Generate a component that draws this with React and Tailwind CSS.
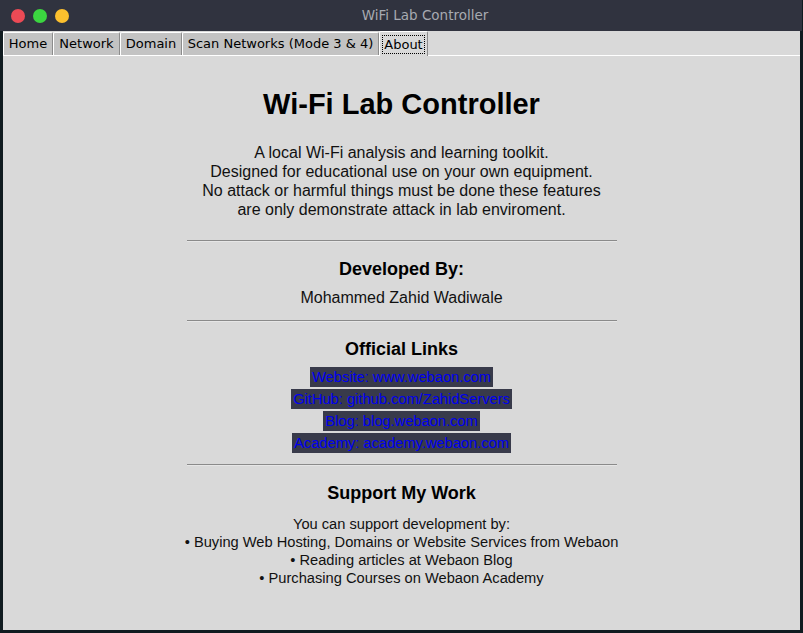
import React from "react";

const tabs = [
  { label: "Home", w: "w-[50px]" },
  { label: "Network", w: "w-[67px]" },
  { label: "Domain", w: "w-[62px]" },
  { label: "Scan Networks (Mode 3 & 4)", w: "w-[197px]" },
];

const links = [
  "Website: www.webaon.com",
  "GitHub: github.com/ZahidServers",
  "Blog: blog.webaon.com",
  "Academy: academy.webaon.com",
];

function Sep({ className = "" }) {
  return (
    <div className={`w-[430px] border-t border-t-[#8a8a8a] border-b border-b-[#e6e6e6] ${className}`} />
  );
}

export default function App() {
  return (
    <div className="w-[803px] h-[633px] bg-[#101b20] overflow-hidden" style={{ fontFamily: '"Liberation Sans", Arial, sans-serif' }}>
      {/* Title bar */}
      <div className="h-[31px] w-[802px] bg-[#30333f] flex items-center">
        <div className="w-[70px] flex items-center gap-[8px] pl-[11px]">
          <div className="w-[14px] h-[14px] rounded-full bg-[#ec4a55]" />
          <div className="w-[14px] h-[14px] rounded-full bg-[#3bd640]" />
          <div className="w-[14px] h-[14px] rounded-full bg-[#fcc02e]" />
        </div>
        <div className="flex-1 flex justify-center pr-[22px] text-[13.5px] text-[#a7aab1]" style={{ fontFamily: '"DejaVu Sans", sans-serif' }}>
          WiFi Lab Controller
        </div>
      </div>

      {/* Window body */}
      <div className="ml-[3px] w-[797px] h-[599px] bg-[#d9d9d9] flex flex-col">
        {/* Tab bar */}
        <div className="h-[25px] flex items-end border-b border-b-white" style={{ fontFamily: '"DejaVu Sans", sans-serif' }}>
          {tabs.map((t) => (
            <div
              key={t.label}
              className={`${t.w} h-[23px] bg-[#c3c3c3] border-l border-l-white border-t border-t-white border-r border-r-[#8c8c8c] rounded-t-[2px] flex items-center justify-center text-[13px] text-black`}
            >
              {t.label}
            </div>
          ))}
          <div className="w-[49px] h-[25px] -mb-px bg-[#d9d9d9] border-l border-l-white border-t border-t-white border-r border-r-[#8c8c8c] rounded-t-[2px] flex items-center justify-center text-[13px] text-black">
            <span className="border border-dotted border-black px-[1px] leading-[17px] mt-[1px]">About</span>
          </div>
        </div>

        {/* Content */}
        <div className="flex-1 flex flex-col items-center text-[#111]">
          <h1 className="mt-[31px] text-[29px] leading-[34px] font-bold text-black">Wi-Fi Lab Controller</h1>
          <div className="mt-[22px] text-[16px] leading-[19px] text-center">
            <div>A local Wi-Fi analysis and learning toolkit.</div>
            <div>Designed for educational use on your own equipment.</div>
            <div>No attack or harmful things must be done these features</div>
            <div>are only demonstrate attack in lab enviroment.</div>
          </div>
          <Sep className="mt-[21px]" />
          <div className="mt-[16px] text-[18px] leading-[22px] font-bold text-black">Developed By:</div>
          <div className="mt-[8px] text-[16px] leading-[19px]">Mohammed Zahid Wadiwale</div>
          <Sep className="mt-[13px]" />
          <div className="mt-[16px] text-[18px] leading-[22px] font-bold text-black">Official Links</div>
          <div className="mt-[7px] flex flex-col items-center gap-[2px]">
            {links.map((l) => (
              <div key={l} className="h-[20px] leading-[20px] px-[2px] bg-[#383a4a] text-[#0000f0] text-[14.67px]">
                {l}
              </div>
            ))}
          </div>
          <Sep className="mt-[11px]" />
          <div className="mt-[16px] text-[18px] leading-[22px] font-bold text-black">Support My Work</div>
          <div className="mt-[11px] text-[14.67px] leading-[18px] text-center">
            <div>You can support development by:</div>
            <div>• Buying Web Hosting, Domains or Website Services from Webaon</div>
            <div>• Reading articles at Webaon Blog</div>
            <div>• Purchasing Courses on Webaon Academy</div>
          </div>
        </div>
      </div>
    </div>
  );
}
